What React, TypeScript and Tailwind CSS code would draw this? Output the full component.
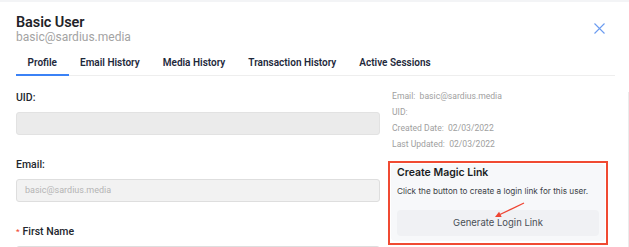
const tabs = ["Profile", "Email History", "Media History", "Transaction History", "Active Sessions"];

function Field({
  label,
  value,
  required,
  light,
}: {
  label: string;
  value?: string;
  required?: boolean;
  light?: boolean;
}) {
  return (
    <div className="mb-[24px]">
      <div className="text-[10.5px] leading-[12px] font-medium text-[#23272e] mb-[8px]">
        {required && <span className="text-[#f04a32] mr-[3px] text-[8px] align-top">*</span>}
        {label}
      </div>
      <div
        className={
          "h-[23px] rounded-[3px] border px-[8px] text-[9px] leading-[21px] text-[#b4b4b4] " +
          (light ? "bg-[#f2f2f2] border-[#dedede]" : "bg-[#ebebeb] border-[#e2e2e2]")
        }
      >
        {value}
      </div>
    </div>
  );
}

export default function App() {
  return (
    <div className="h-[247px] overflow-hidden bg-white border-t-2 border-[#f3f4f6] font-['Roboto',sans-serif] relative">
      <div className="absolute right-0 top-[90px] bottom-0 w-px bg-[#ebebeb]" />
      <div className="pl-4 pr-[14px]">
        {/* Header */}
        <div className="flex items-start justify-between pt-[12px]">
          <div>
            <div className="text-[14.5px] leading-[17px] font-semibold text-[#1f2329] tracking-[-0.1px]">Basic User</div>
            <div className="text-[12px] leading-[12px] text-[#a3a3a3]">basic@sardius.media</div>
          </div>
          <svg className="mt-[9px] mr-[10px]" width="11" height="11" viewBox="0 0 11 11">
            <path d="M0.5 0.5 L10.5 10.5 M10.5 0.5 L0.5 10.5" stroke="#6b9cf0" strokeWidth="1.1" />
          </svg>
        </div>

        {/* Tabs */}
        <div className="flex mt-[10px] border-b border-[#eeeeee]">
          {tabs.map((t, i) => (
            <div
              key={t}
              className={
                "px-[11.5px] pt-[4px] pb-[5px] text-[10px] leading-[12px] font-semibold text-[#1e293b] border-b-2 -mb-px " +
                (i === 0 ? "border-[#3b82f6]" : "border-transparent")
              }
            >
              {t}
            </div>
          ))}
        </div>

        {/* Body */}
        <div className="flex">
          <div className="w-[364px] pt-[16px]">
            <Field label="UID:" />
            <Field label="Email:" value="basic@sardius.media" light />
            <Field label="First Name" required light />
          </div>

          <div className="ml-[12px] w-[216px] pt-[12px]">
            <div className="text-[8.6px] leading-[16px] text-[#a0a0a0]">
              <div>Email:&nbsp; basic@sardius.media</div>
              <div>UID:</div>
              <div>Created Date:&nbsp; 02/03/2022</div>
              <div>Last Updated:&nbsp; 02/03/2022</div>
            </div>

            <div className="relative -ml-[4px] mt-[9px] w-[220px] h-[84px] border-2 border-[#f04a32] px-px pt-px pb-[2px]">
              <div className="h-full rounded-[4px] bg-[#f7f8fa] px-[6px] pt-[2px] font-['Inter',sans-serif]">
                <div className="text-[10.5px] leading-[14px] font-semibold text-[#1a1d23]">Create Magic Link</div>
                <div className="mt-[5px] text-[8.2px] leading-[12px] text-[#3b3f46] whitespace-nowrap">
                  Click the button to create a login link for this user.
                </div>
                <div className="mt-[13px] h-[26px] rounded-[4px] bg-[#f0f1f4] flex items-center justify-center text-[9.5px] text-[#4a4f57]">
                  Generate Login Link
                </div>
              </div>
              <svg className="absolute left-[100px] top-[36px]" width="38" height="22" viewBox="0 0 38 22">
                <line x1="34" y1="4" x2="10" y2="15.5" stroke="#ef4432" strokeWidth="1.3" />
                <polygon points="5,18 11.7,18.1 9.1,12.8" fill="#ef4432" />
              </svg>
            </div>
          </div>
        </div>
      </div>
    </div>
  );
}
